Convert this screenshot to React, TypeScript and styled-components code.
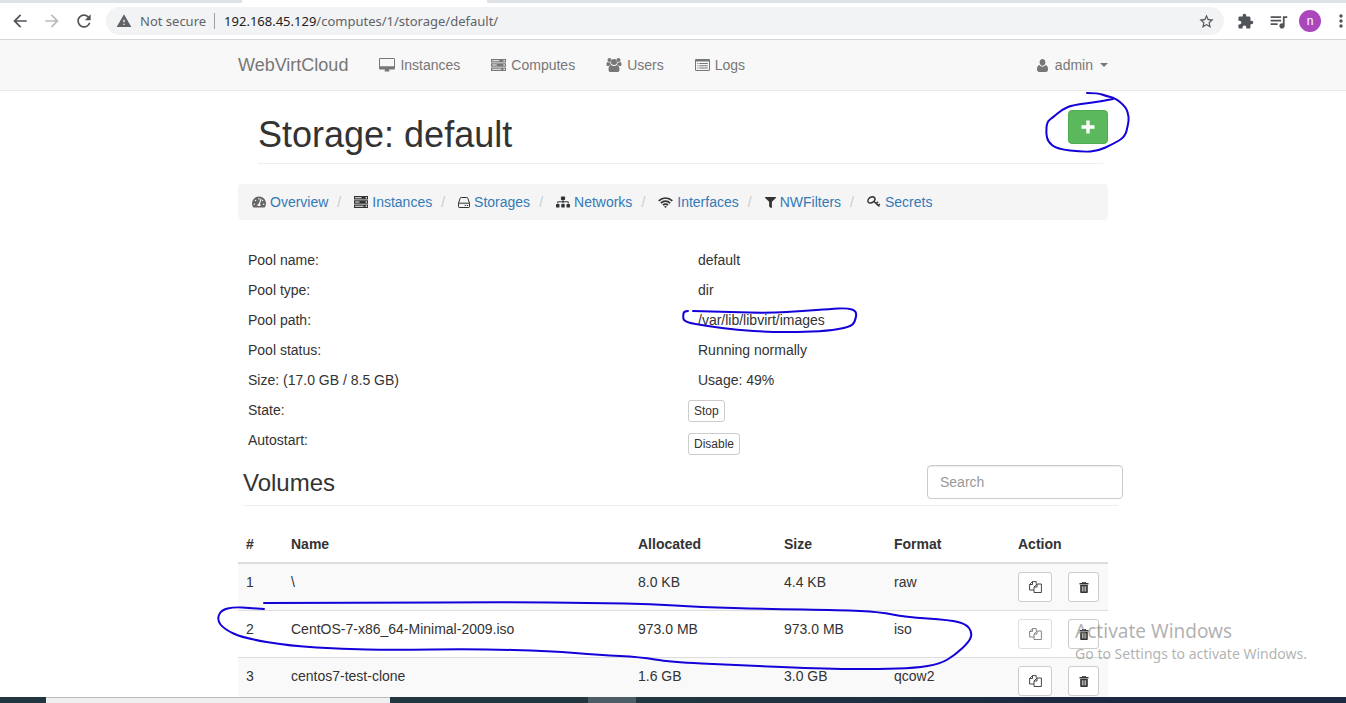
import React from "react";
import styled, { createGlobalStyle, css } from "styled-components";
import {
  MdArrowBack,
  MdArrowForward,
  MdRefresh,
  MdWarning,
  MdStarBorder,
  MdExtension,
  MdQueueMusic,
  MdMoreVert,
} from "react-icons/md";
import { FaTachometerAlt, FaSitemap, FaFilter } from "react-icons/fa";

const GlobalStyle = createGlobalStyle`
  *, *::before, *::after { box-sizing: border-box; }
  body {
    margin: 0;
    background: #fff;
    color: #333;
    font: 14px/20px "Liberation Sans", Arial, sans-serif;
  }
  button, input { font-family: inherit; }
  a { text-decoration: none; }
`;

/* ---------- icons ---------- */

const Icon = styled.svg<{ $w?: number; $h?: number }>`
  display: block;
  flex: none;
  width: ${(p) => p.$w ?? 14}px;
  height: ${(p) => p.$h ?? 14}px;
  fill: currentColor;
`;

const DesktopIcon = () => (
  <Icon $w={16} $h={14} viewBox="0 0 16 14">
    <path
      fillRule="evenodd"
      d="M1.3 0h13.4C15.4 0 16 .6 16 1.3v8.9c0 .7-.6 1.3-1.3 1.3H10c0 .7.5 1.1.5 1.5s-.2.5-.5.5H6c-.3 0-.5-.2-.5-.5s.5-.8.5-1.5H1.3C.6 11.500 0 10.900 0 10.200V1.300C0 .6.600 0 1.300 0zM1.300 1C1.100 1 1 1.100 1 1.300v6.900h14V1.300c0-.2-.1-.3-.3-.3z"
    />
  </Icon>
);

const ServerIcon = ({ width = 15 }: { width?: number }) => (
  <Icon $w={width} $h={12} viewBox="0 0 15 12" preserveAspectRatio="none">
    <path
      fillRule="evenodd"
      d="M0 0h15v3.400H0zM1.200 1.200v1h7v-1zM12.500 1v1.400h1.300V1zM0 4.300h15v3.400H0zM1.200 5.500v1h4.600v-1zM12.500 5.300v1.400h1.300V5.300zM0 8.600h15V12H0zM1.200 9.800v1h9v-1zM12.500 9.600V11h1.300V9.600z"
    />
  </Icon>
);

const UsersIcon = () => (
  <Icon $w={16} $h={14} viewBox="0 0 15 14">
    <circle cx="3" cy="2" r="2" />
    <circle cx="12" cy="2" r="2" />
    <circle cx="7.500" cy="4" r="3" />
    <path d="M4.400 7C3.500 7 2.800 7.300 2.200 8H1.100C.5 8 0 7.700 0 7c0-1 .1-3 1.100-3 .3 0 1 .6 2 .6.3 0 .6-.1.9-.2C3.900 5.300 4 6.300 4.600 7zM10.600 7c.9 0 1.600.3 2.200 1h1.100c.6 0 1.100-.3 1.100-1 0-1-.1-3-1.100-3-.3 0-1 .6-2 .6-.3 0-.6-.1-.9-.2.1.9 0 1.900-.6 2.600z" />
    <path d="M4.500 6.900c.5 0 1.300 1.100 3 1.100s2.500-1.100 3-1.100c1.800 0 2.500 2.500 2.500 4.800 0 1.400-.9 2.300-2.200 2.300H4.200C2.900 14 2 13.100 2 11.700c0-2.300.7-4.800 2.500-4.800z" />
  </Icon>
);

const ListIcon = () => (
  <Icon $w={15} $h={12} viewBox="0 0 15 12">
    <path
      fillRule="evenodd"
      d="M1.200 0h12.600C14.500 0 15 .5 15 1.200v9.600c0 .7-.5 1.200-1.200 1.200H1.200C.5 12 0 11.500 0 10.800V1.200C0 .5.5 0 1.200 0zM1 2.600v8.100c0 .2.100.3.300.3h12.400c.2 0 .3-.1.300-.3V2.600z"
    />
    <path d="M2.300 4h1.100v1H2.300zM4.300 4h8.500v1H4.300zM2.300 6.200h1.100v1H2.300zM4.300 6.200h8.500v1H4.300zM2.300 8.400h1.100v1H2.300zM4.300 8.400h8.500v1H4.300z" />
  </Icon>
);

const UserIcon = () => (
  <Icon $w={11} $h={13} viewBox="0 0 11 13">
    <path d="M5.500 0c1.700 0 2.900 1.300 2.900 3.200S7.200 6.800 5.500 6.800 2.600 5.100 2.600 3.200 3.800 0 5.500 0zM2.500 6.100C3.200 7.200 4.300 7.800 5.500 7.800s2.300-.6 3-1.700C10.400 6.500 11 8.200 11 10.600c0 1.500-.9 2.400-2.200 2.400H2.200C.9 13 0 12.100 0 10.600 0 8.200.6 6.500 2.500 6.100z" />
  </Icon>
);

const DiskIcon = () => (
  <Icon $w={12} $h={11} viewBox="0 0 12 11">
    <g fill="none" stroke="currentColor" strokeLinejoin="round">
      <path d="M.5 6.200L2.200 1.200C2.400.7 2.700.5 3.100.5h5.800c.4 0 .7.2.9.7l1.700 5v3.600c0 .4-.3.700-.7.700H1.200c-.4 0-.7-.3-.7-.7zM.5 6.200h11" />
    </g>
    <circle cx="7.300" cy="8.400" r=".7" />
    <circle cx="9.500" cy="8.400" r=".7" />
  </Icon>
);

const WifiIcon = () => (
  <Icon $w={15} $h={11} viewBox="0 0 15 11">
    <g fill="none" stroke="currentColor" strokeWidth="1.700">
      <path d="M.7 3.900c3.900-3.900 9.700-3.900 13.600 0" />
      <path d="M2.900 6.100c2.600-2.600 6.600-2.600 9.200 0" />
      <path d="M5 8.200c1.400-1.400 3.600-1.400 5 0" />
    </g>
    <path d="M7.500 11L6.100 9.500c.8-.7 2-.7 2.800 0z" />
  </Icon>
);

const KeyIcon = () => (
  <Icon $w={14} $h={12} viewBox="0 0 14 12">
    <g fill="none" stroke="currentColor">
      <ellipse cx="4.400" cy="3.900" rx="3.800" ry="2.700" strokeWidth="1.500" transform="rotate(-35 4.400 3.900)" />
      <path d="M6.600 5.200l5.800 5.300M9 7.800l2-1.900M11 9.700l1.800-1.700" strokeWidth="1.500" />
    </g>
  </Icon>
);

const CopyIcon = () => (
  <Icon $w={13} $h={12} viewBox="0 0 13 12">
    <g fill="none" stroke="currentColor" strokeWidth="0.900" strokeLinejoin="round">
      <path d="M5 9H.6V3.500L3.500.6h3.700v2.200M3.500.6v2.900H.6" />
      <path d="M5 6l3-3h4.400v8.500H5zM8 3v3H5" />
    </g>
  </Icon>
);

const TrashIcon = () => (
  <Icon $w={10} $h={11} viewBox="0 0 10 11">
    <path
      fillRule="evenodd"
      d="M3 1V.5C3 .2 3.200 0 3.500 0h3c.3 0 .5.2.5.5V1h2.500v1.400h-9V1zM4 .8V1h2V.8zM1.200 3h7.600v7.200c0 .5-.3.8-.8.8H2c-.5 0-.8-.3-.8-.8zM2.900 4.200v5.400h.7V4.200zM4.650 4.200v5.400h.7V4.200zM6.400 4.200v5.400h.7V4.200z"
    />
  </Icon>
);

const PlusIcon = () => (
  <Icon $w={14} $h={14} viewBox="0 0 14 14">
    <path d="M5.300.5h3.400v4.800h4.800v3.400H8.700v4.800H5.300V8.700H.5V5.300h4.800z" />
  </Icon>
);

/* ---------- browser chrome ---------- */

const Window = styled.div`
  position: relative;
  display: flex;
  flex-direction: column;
  height: 100vh;
  overflow: hidden;
`;

const TabStrip = styled.div`
  display: flex;
  flex: none;
  height: 3px;
  background: #dee1e6;
`;

const ActiveTab = styled.div`
  width: 245px;
  margin-left: 242px;
  background: #fff;
`;

const BrowserBar = styled.div`
  display: flex;
  flex: none;
  align-items: center;
  height: 37px;
  margin-right: -7px;
  border-bottom: 1px solid #d5d7da;
  color: #5f6368;
`;

const BarButton = styled.button<{ $dim?: boolean; $w?: number }>`
  display: flex;
  flex: none;
  align-items: center;
  justify-content: center;
  width: ${(p) => p.$w ?? 32}px;
  height: 28px;
  padding: 0;
  border: 0;
  background: none;
  color: ${(p) => (p.$dim ? "#babcbe" : "#505357")};
`;

const NavButtons = styled.div`
  display: flex;
  padding: 0 6px 0 4px;
`;

const AddressBar = styled.div`
  display: flex;
  flex: 1;
  align-items: center;
  height: 28px;
  padding: 0 2px 0 10px;
  border-radius: 14px;
  background: #f1f3f4;
  font: 13px/20px "Noto Sans", sans-serif;
`;

const Security = styled.span`
  margin-left: 8px;
  padding-right: 8px;
  border-right: 1px solid #9aa0a6;
  line-height: 16px;
`;

const Url = styled.span`
  flex: 1;
  padding-left: 9px;

  b {
    color: #202124;
    font-weight: 400;
  }
`;

const Avatar = styled.button`
  flex: none;
  width: 22px;
  height: 22px;
  margin: 0 8px 0 10px;
  padding: 0;
  border: 0;
  border-radius: 50%;
  background: #ab47bc;
  color: #fff;
  font-size: 12px;
  line-height: 20px;
`;

/* ---------- page ---------- */

const Page = styled.div`
  flex: 1;
  min-height: 0;
  overflow: hidden;
`;

const Navbar = styled.nav`
  height: 51px;
  border-bottom: 1px solid #e7e7e7;
  background: #f8f8f8;
`;

const Container = styled.div`
  max-width: 870px;
  margin: 0 auto;
`;

const NavRow = styled(Container)`
  display: flex;
  align-items: center;
  height: 50px;
`;

const Brand = styled.a`
  margin-right: 31px;
  color: #777;
  font-size: 18px;
`;

const NavLink = styled.a<{ $end?: boolean }>`
  display: flex;
  align-items: center;
  gap: ${(p) => (p.$end ? 7 : 5)}px;
  margin-right: ${(p) => (p.$end ? 0 : 31)}px;
  margin-left: ${(p) => (p.$end ? "auto" : 0)};
  color: #777;
`;

const Caret = styled.span`
  border: 4px solid transparent;
  border-top-color: currentColor;
  border-bottom: 0;
`;

const TitleRow = styled.header`
  position: relative;
  padding: 19px 5px 0 20px;
`;

const Title = styled.h1`
  margin: 0;
  padding-bottom: 3px;
  border-bottom: 1px solid #eee;
  font-size: 36px;
  font-weight: 400;
  line-height: 50px;
`;

const AddButton = styled.button`
  position: absolute;
  top: 19px;
  right: 0;
  display: flex;
  align-items: center;
  justify-content: center;
  width: 40px;
  height: 34px;
  border: 1px solid #4cae4c;
  border-radius: 4px;
  background: #5cb85c;
  color: #fff;
`;

const Breadcrumb = styled.ol`
  display: flex;
  height: 36px;
  margin: 20px 0 25px;
  padding: 8px 14px;
  border-radius: 4px;
  background: #f5f5f5;
  list-style: none;
`;

const Crumb = styled.li`
  display: flex;
  align-items: center;
  gap: 4px;

  & + &::before {
    content: "/";
    padding: 0 9px;
    color: #ccc;
  }

  a {
    color: #337ab7;
  }
`;

const Details = styled.dl`
  display: grid;
  grid-template-columns: 450px 1fr;
  height: 210px;
  margin: 0;
  padding-left: 10px;
`;

const DetailColumn = styled.div`
  dt,
  dd {
    margin: 0;
    line-height: 30px;
  }
`;

const DetailAction = styled.dd`
  && {
    display: flex;
    margin: 5px 0 11px -10px;
    line-height: 20px;
  }
`;

const SmallButton = styled.button`
  height: 22px;
  padding: 0 5px;
  border: 1px solid #ccc;
  border-radius: 3px;
  background: #fff;
  color: #333;
  font-size: 12px;
  line-height: 18px;
`;

const VolumesHead = styled.div`
  display: flex;
  justify-content: space-between;
  height: 41px;
  margin: 10px -10px 20px 5px;
  border-bottom: 1px solid #eee;
`;

const VolumesTitle = styled.h3`
  margin: 0;
  font-size: 24px;
  font-weight: 400;
  line-height: 36px;
`;

const Search = styled.input`
  width: 196px;
  height: 34px;
  margin-right: -5px;
  padding: 6px 12px;
  border: 1px solid #ccc;
  border-radius: 4px;
  box-shadow: inset 0 1px 1px rgba(0, 0, 0, 0.075);
  font-size: 14px;

  &::placeholder {
    color: #999;
  }
`;

const Table = styled.table`
  width: 100%;
  table-layout: fixed;
  border-spacing: 0;

  th,
  td {
    padding: 8px;
    text-align: left;
    vertical-align: top;
  }

  th {
    border-bottom: 2px solid #ddd;
  }

  td {
    border-bottom: 1px solid #ddd;
  }

  tbody tr:nth-child(odd) {
    background: #f9f9f9;
  }
`;

const Col = styled.col<{ $w?: number }>`
  ${(p) =>
    p.$w &&
    css`
      width: ${p.$w}px;
    `}
`;

const ActionButton = styled.button<{ $w: number }>`
  display: flex;
  align-items: center;
  justify-content: center;
  width: ${(p) => p.$w}px;
  height: 30px;
  padding: 0;
  border: 1px solid #ccc;
  border-radius: 3px;
  background: #fff;
  color: #333;

  &:disabled {
    opacity: 0.65;
  }
`;

/* ---------- desktop overlays ---------- */

const Taskbar = styled.footer`
  display: flex;
  flex: none;
  height: 6px;
  background: linear-gradient(90deg, #22363f 50%, #1b2942 80%);
`;

const TaskbarPart = styled.div<{ $w: number; $bg?: string; $edge?: boolean }>`
  width: ${(p) => p.$w}px;
  border-top: ${(p) => (p.$edge ? "1px solid #bbb" : "0")};
  background: ${(p) => p.$bg ?? "none"};
`;

const Watermark = styled.aside`
  position: absolute;
  right: 39px;
  bottom: 39px;
  color: rgba(125, 125, 125, 0.6);
  font: 14px/20px "Noto Sans", sans-serif;
  pointer-events: none;

  strong {
    display: block;
    font-size: 19px;
    font-weight: 400;
    line-height: 25px;
  }
`;

const Ink = styled.svg`
  position: absolute;
  top: 0;
  left: 50%;
  width: 1346px;
  height: 703px;
  margin-left: -673px;
  fill: none;
  stroke: #1400d8;
  stroke-width: 2;
  stroke-linecap: round;
  stroke-linejoin: round;
  pointer-events: none;
`;

/* Pen strokes as sampled points, joined by curves through their midpoints. */
type Point = [number, number];

const strokes: Point[][] = [
  [
    [1087, 93], [1098, 93], [1106, 96], [1115, 98], [1126, 107], [1129, 117], [1128, 125], [1125, 137], [1113, 144],
    [1098, 151], [1083, 152], [1057, 149], [1048, 142], [1046, 133], [1047, 122], [1052, 118], [1063, 109],
    [1073, 105], [1097, 102], [1113, 99],
  ],
  [
    [688, 311], [684, 311], [683, 316], [684, 322], [707, 326], [737, 330], [770, 332], [797, 332], [827, 331],
    [850, 327], [855, 322], [857, 311], [847, 308], [830, 309], [803, 311], [770, 313], [730, 312], [693, 311],
  ],
  [
    [264, 603], [380, 603], [500, 602], [600, 603], [650, 604], [700, 607], [767, 609], [840, 610], [880, 612],
    [905, 617], [950, 620], [966, 624], [972, 632], [970, 641], [955, 655], [940, 664], [915, 668], [880, 669],
    [830, 669], [733, 665], [670, 662], [640, 657], [600, 655], [550, 651], [476, 649], [390, 650], [343, 649],
    [290, 646], [243, 638], [224, 629], [217, 620], [221, 610], [234, 607], [250, 608], [264, 609],
  ],
];

const toPath = (points: Point[]) => {
  const [first, ...rest] = points;
  const curves = rest.slice(0, -1).map(([x, y], i) => {
    const [nx, ny] = rest[i + 1];
    return `Q${x} ${y} ${(x + nx) / 2} ${(y + ny) / 2}`;
  });
  return `M${first.join(" ")}${curves.join("")}L${rest[rest.length - 1].join(" ")}`;
};

const crumbs = [
  { label: "Overview", icon: <FaTachometerAlt size={14} color="#666" /> },
  { label: "Instances", icon: <ServerIcon width={14} /> },
  { label: "Storages", icon: <DiskIcon /> },
  { label: "Networks", icon: <FaSitemap size={14} /> },
  { label: "Interfaces", icon: <WifiIcon /> },
  { label: "NWFilters", icon: <FaFilter size={11} /> },
  { label: "Secrets", icon: <KeyIcon /> },
];

const labels = [
  "Pool name:",
  "Pool type:",
  "Pool path:",
  "Pool status:",
  "Size: (17.0 GB / 8.5 GB)",
  "State:",
  "Autostart:",
];

const values = ["default", "dir", "/var/lib/libvirt/images", "Running normally", "Usage: 49%"];

const volumes = [
  { name: "\\", allocated: "8.0 KB", size: "4.4 KB", format: "raw" },
  { name: "CentOS-7-x86_64-Minimal-2009.iso", allocated: "973.0 MB", size: "973.0 MB", format: "iso" },
  { name: "centos7-test-clone", allocated: "1.6 GB", size: "3.0 GB", format: "qcow2" },
];

export default function App() {
  return (
    <Window>
      <GlobalStyle />
      <TabStrip>
        <ActiveTab />
      </TabStrip>
      <BrowserBar>
        <NavButtons>
          <BarButton aria-label="Back"><MdArrowBack size={20} /></BarButton>
          <BarButton aria-label="Forward" $dim><MdArrowForward size={20} /></BarButton>
          <BarButton aria-label="Reload"><MdRefresh size={20} /></BarButton>
        </NavButtons>
        <AddressBar>
          <MdWarning size={16} />
          <Security>Not secure</Security>
          <Url><b>192.168.45.129</b>/computes/1/storage/default/</Url>
          <BarButton aria-label="Bookmark"><MdStarBorder size={17} /></BarButton>
        </AddressBar>
        <BarButton aria-label="Extensions" $w={43}><MdExtension size={17} /></BarButton>
        <BarButton aria-label="Media" $w={22}><MdQueueMusic size={21} /></BarButton>
        <Avatar aria-label="Profile">n</Avatar>
        <BarButton aria-label="Menu" $w={24}><MdMoreVert size={20} /></BarButton>
      </BrowserBar>

      <Page>
        <Navbar>
          <NavRow>
            <Brand href="#">WebVirtCloud</Brand>
            <NavLink href="#"><DesktopIcon />Instances</NavLink>
            <NavLink href="#"><ServerIcon />Computes</NavLink>
            <NavLink href="#"><UsersIcon />Users</NavLink>
            <NavLink href="#"><ListIcon />Logs</NavLink>
            <NavLink href="#" $end><UserIcon />admin<Caret /></NavLink>
          </NavRow>
        </Navbar>

        <Container as="main">
          <TitleRow>
            <Title>Storage: default</Title>
            <AddButton aria-label="Add volume"><PlusIcon /></AddButton>
          </TitleRow>

          <Breadcrumb>
            {crumbs.map((c) => (
              <Crumb key={c.label}>{c.icon}<a href="#">{c.label}</a></Crumb>
            ))}
          </Breadcrumb>

          <Details>
            <DetailColumn>
              {labels.map((l) => <dt key={l}>{l}</dt>)}
            </DetailColumn>
            <DetailColumn>
              {values.map((v) => <dd key={v}>{v}</dd>)}
              <DetailAction><SmallButton>Stop</SmallButton></DetailAction>
              <DetailAction><SmallButton>Disable</SmallButton></DetailAction>
            </DetailColumn>
          </Details>

          <VolumesHead>
            <VolumesTitle>Volumes</VolumesTitle>
            <Search placeholder="Search" aria-label="Search volumes" />
          </VolumesHead>

          <Table>
            <colgroup>
              <Col $w={45} />
              <Col />
              <Col $w={146} />
              <Col $w={110} />
              <Col $w={124} />
              <Col $w={50} />
              <Col $w={48} />
            </colgroup>
            <thead>
              <tr>
                <th>#</th>
                <th>Name</th>
                <th>Allocated</th>
                <th>Size</th>
                <th>Format</th>
                <th colSpan={2}>Action</th>
              </tr>
            </thead>
            <tbody>
              {volumes.map((v, i) => (
                <tr key={v.name}>
                  <td>{i + 1}</td>
                  <td>{v.name}</td>
                  <td>{v.allocated}</td>
                  <td>{v.size}</td>
                  <td>{v.format}</td>
                  <td>
                    <ActionButton $w={34} aria-label="Clone" disabled={v.format === "iso"}><CopyIcon /></ActionButton>
                  </td>
                  <td>
                    <ActionButton $w={31} aria-label="Delete"><TrashIcon /></ActionButton>
                  </td>
                </tr>
              ))}
            </tbody>
          </Table>
        </Container>
      </Page>

      <Taskbar>
        <TaskbarPart $w={46} />
        <TaskbarPart $w={344} $bg="#f0f0f0" $edge />
        <TaskbarPart $w={198} />
        <TaskbarPart $w={48} $bg="#4d5d66" />
      </Taskbar>

      <Watermark>
        <strong>Activate Windows</strong>
        Go to Settings to activate Windows.
      </Watermark>

      <Ink viewBox="0 0 1346 703" aria-hidden="true">
        {strokes.map((points, i) => (
          <path key={i} d={toPath(points)} />
        ))}
      </Ink>
    </Window>
  );
}
